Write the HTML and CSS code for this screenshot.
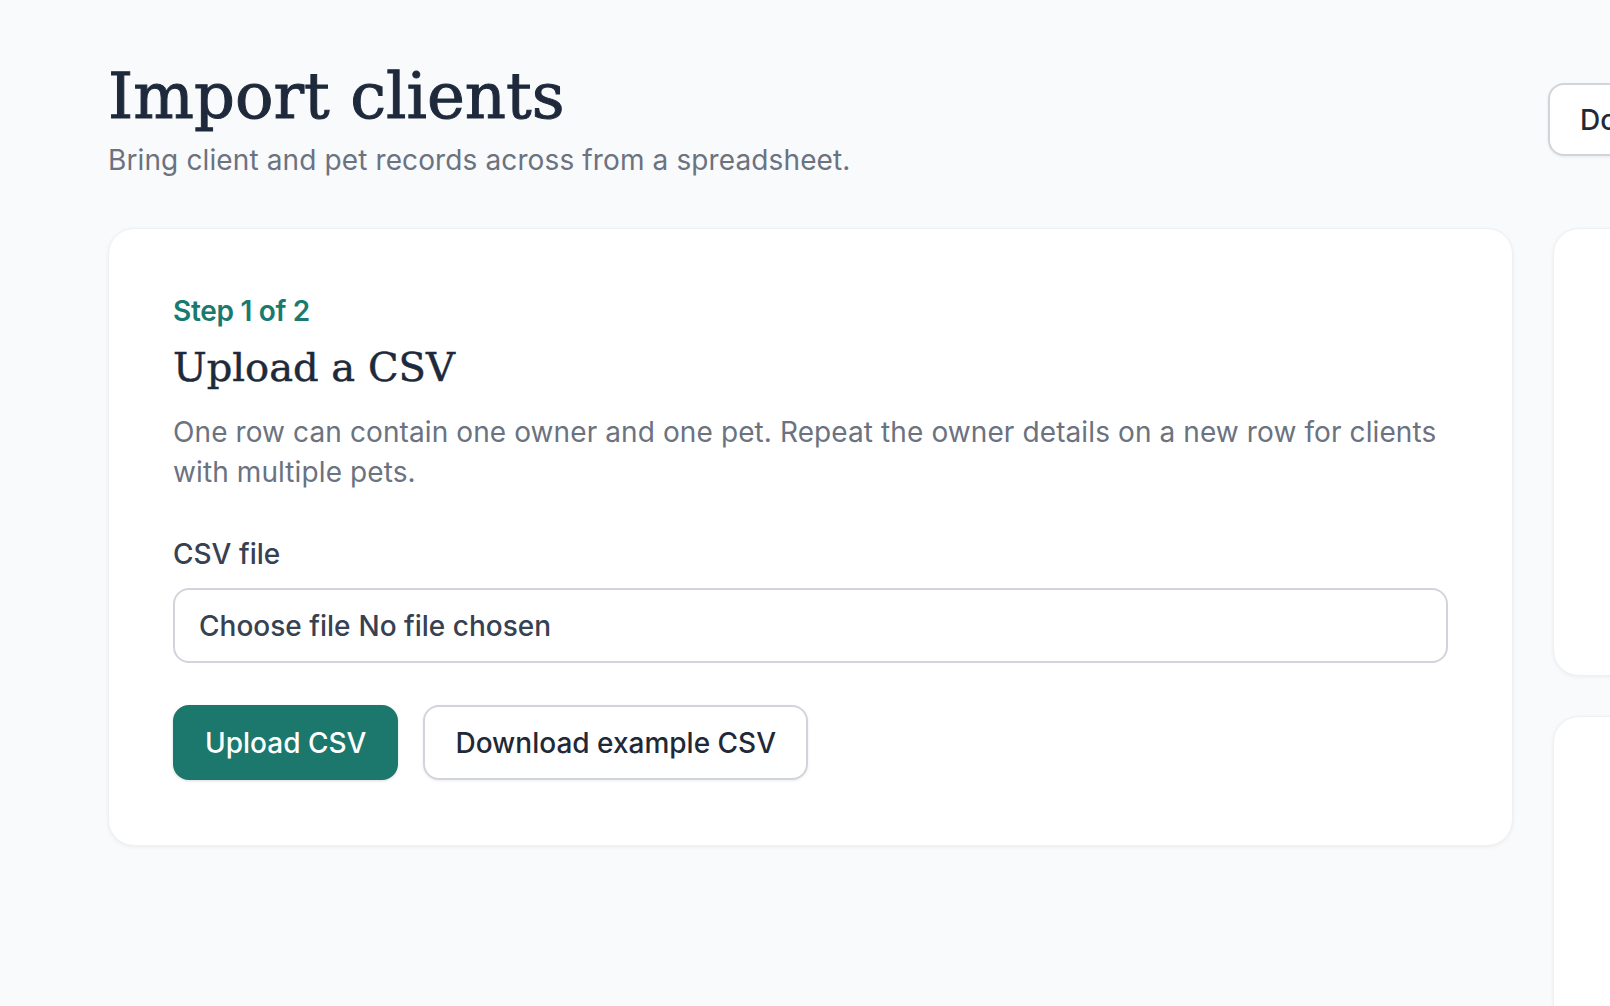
FILE: index.html
```html
<!DOCTYPE html>
<html>
    <head>
        <link rel="stylesheet" href="styles.css">
    </head>
    <body>
        <div class="page">
            <header class="page-header">
                <div class="page-heading">
                    <h1>Import clients</h1>
                    <p class="lead">Bring client and pet records across from a spreadsheet.</p>
                </div>
                <div class="page-actions">
                    <a class="btn btn-secondary" href="#">Download template</a>
                </div>
            </header>
            <div class="layout">
                <section class="card upload-card">
                    <p class="step">Step 1 of 2</p>
                    <h2>Upload a CSV</h2>
                    <p class="help">One row can contain one owner and one pet. Repeat the owner details on a new row for clients with multiple pets.</p>
                    <form action="#" method="POST">
                        <label class="field-label" for="csv">CSV file</label>
                        <div class="file-input">
                            <span>Choose file</span> <span>No file chosen</span>
                        </div>
                        <div class="actions">
                            <button type="submit" class="btn btn-primary">Upload CSV</button>
                            <a class="btn btn-secondary" href="#">Download example CSV</a>
                        </div>
                    </form>
                </section>
                <aside class="side">
                    <div class="card side-card"></div>
                    <div class="card side-card tall"></div>
                </aside>
            </div>
        </div>
    </body>
</html>
```

FILE: styles.css
```css
*, *:after, *:before {
    box-sizing: border-box;
    margin: 0;
    padding: 0;
}
html, body {
    overflow: hidden;
}
body {
    background: #f9fafb;
    font-family: Inter, "Noto Sans", sans-serif;
    color: #1f2937;
    height: 1006px;
}
.page {
    padding: 62px 0 0 108px;
    width: 2000px;
}
.page-header {
    display: flex;
    align-items: flex-start;
}
.page-heading {
    width: 1440px;
    flex: none;
}
h1 {
    font-family: "DejaVu Serif", serif;
    font-weight: 400;
    font-size: 64px;
    line-height: 68px;
    color: #1e293b;
    -webkit-text-stroke: 1px #1e293b;
}
.lead {
    margin-top: 12px;
    font-size: 28px;
    line-height: 36px;
    letter-spacing: 0.12px;
    color: #6b7280;
}
.page-actions {
    padding-top: 21px;
}
.layout {
    display: grid;
    grid-template-columns: 1405px 420px;
    align-items: start;
    gap: 40px;
    margin-top: 50px;
}
.card {
    background: #fff;
    border: 1px solid #eef0f3;
    border-radius: 26px;
    box-shadow: 0 1px 4px rgba(15, 23, 42, 0.06);
}
.upload-card {
    padding: 64px 64px 65px;
}
.step {
    font-size: 28px;
    line-height: 36px;
    font-weight: 600;
    color: #1a7a6d;
    letter-spacing: -0.3px;
}
h2 {
    margin-top: 12px;
    font-family: "DejaVu Serif", serif;
    font-weight: 400;
    font-size: 40px;
    line-height: 52px;
    color: #1e293b;
    -webkit-text-stroke: 0.5px #1e293b;
}
.help {
    margin-top: 19px;
    font-size: 28px;
    line-height: 40px;
    letter-spacing: 0.1px;
    color: #6b7280;
}
form {
    margin-top: 44px;
}
.field-label {
    display: block;
    font-size: 28px;
    line-height: 36px;
    font-weight: 500;
    color: #374151;
}
.file-input {
    margin-top: 16px;
    height: 75px;
    border: 2px solid #d1d5db;
    border-radius: 16px;
    background: #fff;
    padding: 0 24px;
    display: flex;
    align-items: center;
    gap: 8px;
    font-size: 28px;
    font-weight: 500;
    color: #374151;
}
.actions {
    display: flex;
    gap: 25px;
    margin-top: 42px;
}
.btn {
    display: inline-flex;
    align-items: center;
    justify-content: center;
    height: 75px;
    padding: 0 30px;
    border-radius: 16px;
    font-family: Inter, "Noto Sans", sans-serif;
    font-size: 28px;
    font-weight: 500;
    text-decoration: none;
    cursor: pointer;
    white-space: nowrap;
}
.btn-primary {
    background: #1c786c;
    color: #fff;
    border: 2px solid #1c786c;
    box-shadow: 0 1px 3px rgba(15, 23, 42, 0.15);
}
.btn-secondary {
    background: #fff;
    color: #1f2937;
    border: 2px solid #d1d5db;
    box-shadow: 0 1px 3px rgba(15, 23, 42, 0.08);
}
.page-actions .btn {
    height: 73px;
}
.side {
    display: flex;
    flex-direction: column;
    gap: 40px;
}
.side-card {
    height: 448px;
}
.side-card.tall {
    height: 600px;
}
```
